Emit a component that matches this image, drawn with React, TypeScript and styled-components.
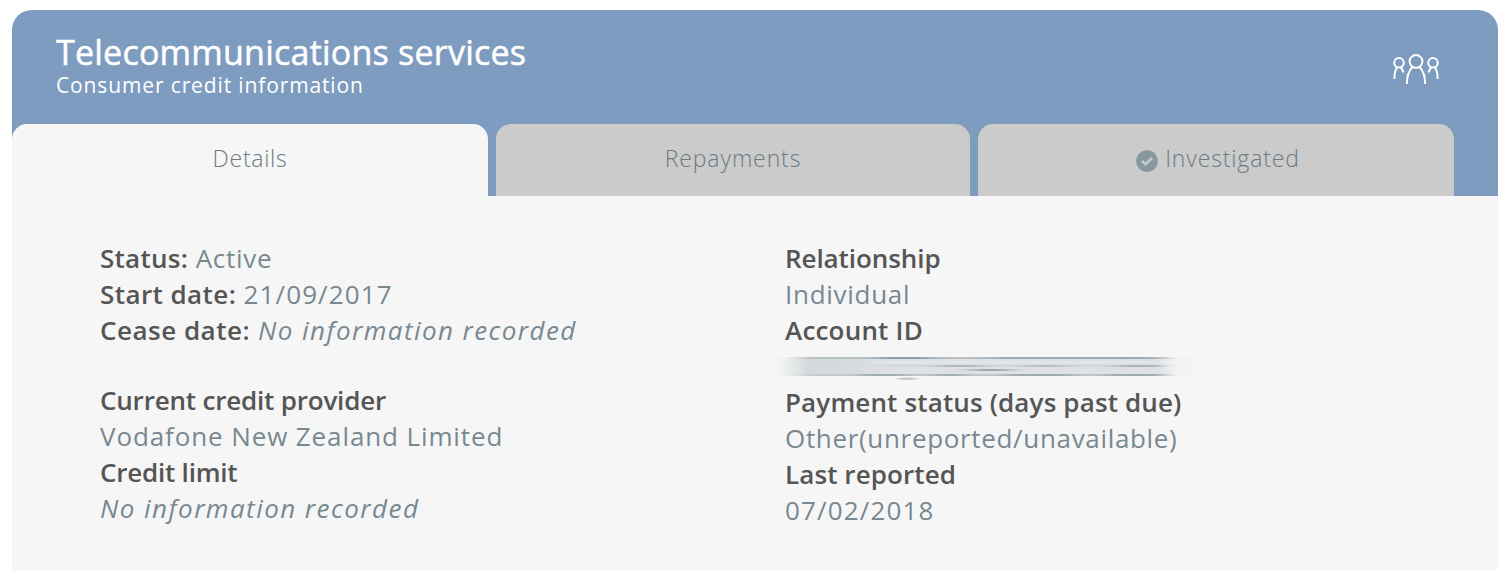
import React from 'react';
import styled, { createGlobalStyle } from 'styled-components';

const GlobalStyle = createGlobalStyle`
  *, *::before, *::after { box-sizing: border-box; }
  body {
    margin: 0;
    background: #ffffff;
    font-family: "Open Sans", "Liberation Sans", sans-serif;
  }
`;

const Page = styled.main`
  height: 570px;
  padding: 10px 12px 0;
  overflow: hidden;
`;

const Card = styled.section`
  display: flex;
  flex-direction: column;
  height: 560px;
  border-radius: 20px 20px 0 0;
  overflow: hidden;
  background: #f6f6f6;
`;

const Header = styled.header`
  display: flex;
  flex-direction: column;
  justify-content: space-between;
  height: 186px;
  background: #7e9bc0;
  color: #ffffff;
`;

const Heading = styled.div`
  display: flex;
  justify-content: space-between;
  padding: 22px 58px 0 44px;
`;

const Title = styled.h1`
  margin: 0;
  font-size: 34px;
  font-weight: 400;
  line-height: 40px;
  letter-spacing: 0.23px;
  white-space: nowrap;
  -webkit-text-stroke: 0.5px #ffffff;
`;

const Subtitle = styled.p`
  margin: 0;
  font-size: 21px;
  line-height: 26px;
  letter-spacing: 0.87px;
  white-space: nowrap;
`;

const PeopleIcon = styled.svg`
  width: 48px;
  height: 32px;
  margin-top: 21px;
  fill: none;
  stroke: #ffffff;
  stroke-width: 2;
  stroke-linecap: butt;
`;

const Tabs = styled.nav`
  display: grid;
  grid-template-columns: 476px 474px 476px;
  column-gap: 8px;
  height: 72px;
`;

const Tab = styled.button<{ $active?: boolean; $tracking: number; $indent?: number }>`
  display: flex;
  justify-content: center;
  align-items: flex-start;
  gap: 7px;
  padding: 20px 0 0 ${(p) => p.$indent ?? 0}px;
  border: 0;
  border-radius: 15px 15px 0 0;
  background: ${(p) => (p.$active ? '#f6f6f6' : '#cbcbcb')};
  color: #6d7a82;
  font-family: inherit;
  font-size: 23px;
  font-weight: 300;
  line-height: 28px;
  letter-spacing: ${(p) => p.$tracking}px;
`;

const CheckIcon = styled.svg`
  width: 22px;
  height: 22px;
  margin-top: 6px;
`;

const Body = styled.div`
  display: grid;
  grid-template-columns: 685px 1fr;
  padding: 44px 0 0 88px;
`;

const Column = styled.div<{ $gap?: number }>`
  display: flex;
  flex-direction: column;
  gap: ${(p) => p.$gap ?? 0}px;
`;

const Line = styled.div`
  height: 36px;
  font-size: 26px;
  line-height: 36px;
  white-space: nowrap;
`;

const Label = styled.strong<{ $tracking: number; $space?: number }>`
  margin-right: ${(p) => p.$space ?? 0}px;
  color: #555555;
  font-weight: 600;
  letter-spacing: ${(p) => p.$tracking}px;
`;

const Value = styled.span<{ $tracking: number; $italic?: boolean }>`
  color: #788891;
  font-style: ${(p) => (p.$italic ? 'italic' : 'normal')};
  letter-spacing: ${(p) => p.$tracking}px;
`;

const Smear = styled.svg`
  display: block;
  width: 440px;
  height: 36px;
  margin-left: -25px;
`;

const HiddenAccount = () => (
  <Smear viewBox="0 0 440 36">
    <defs>
      <linearGradient id="fade" x1="0" x2="1">
        <stop offset="0" stopColor="#fff" stopOpacity="0" />
        <stop offset="0.045" stopColor="#fff" stopOpacity="0.06" />
        <stop offset="0.11" stopColor="#fff" />
        <stop offset="0.9" stopColor="#fff" />
        <stop offset="0.95" stopColor="#fff" stopOpacity="0.12" />
        <stop offset="1" stopColor="#fff" stopOpacity="0" />
      </linearGradient>
      <linearGradient id="fill" x1="0" x2="1">
        <stop offset="0" stopColor="#d2d8da" />
        <stop offset="0.2" stopColor="#d5dadc" />
        <stop offset="0.3" stopColor="#dfe2e4" />
        <stop offset="1" stopColor="#dbdfe2" />
      </linearGradient>
      <mask id="ends">
        <rect width="440" height="36" fill="url(#fade)" />
      </mask>
      <filter id="streak" x="-20%" y="-100%" width="140%" height="300%">
        <feGaussianBlur stdDeviation="10 0.5" />
      </filter>
      <filter id="soft" x="-50%" y="-200%" width="200%" height="500%">
        <feGaussianBlur stdDeviation="3 0.4" />
      </filter>
    </defs>
    <g mask="url(#ends)">
      <rect x="0" y="9" width="440" height="19" fill="url(#fill)" />
      <g filter="url(#streak)">
        <rect x="40" y="9" width="385" height="2" fill="#b8c0c5" />
        <rect x="120" y="9" width="50" height="2" fill="#8b9ba6" />
        <rect x="230" y="9" width="165" height="2" fill="#9eaab3" />
        <rect x="120" y="13.5" width="290" height="1.5" fill="#e6e8ea" />
        <rect x="120" y="17" width="260" height="1.5" fill="#cfd4d9" />
        <rect x="180" y="17" width="40" height="2" fill="#aab4bb" />
        <rect x="265" y="17" width="40" height="2" fill="#b5bdc3" />
        <rect x="355" y="17" width="50" height="2" fill="#a9b3bb" />
        <rect x="212" y="21" width="38" height="2" fill="#9aa6ae" />
        <rect x="260" y="23" width="140" height="2" fill="#e2e4e7" />
        <rect x="40" y="26" width="385" height="2" fill="#c3cacf" />
        <rect x="100" y="26" width="45" height="2" fill="#9eaab2" />
        <rect x="175" y="26" width="30" height="2" fill="#9eaab2" />
        <rect x="245" y="26" width="70" height="2" fill="#9eaab2" />
        <rect x="345" y="26" width="60" height="2" fill="#9eaab2" />
      </g>
    </g>
    <ellipse cx="147" cy="30.7" rx="10" ry="1.1" fill="#b5bfc5" filter="url(#soft)" />
  </Smear>
);

export default function App() {
  return (
    <>
      <GlobalStyle />
      <Page>
        <Card>
          <Header>
            <Heading>
              <div>
                <Title>Telecommunications services</Title>
                <Subtitle>Consumer credit information</Subtitle>
              </div>
              <PeopleIcon viewBox="0 0 48 32">
                <circle cx="24" cy="8.4" r="6.4" />
                <path d="M14.8 31C14.8 23.5 17 17.5 20.6 13.8M33.2 31C33.2 23.5 31 17.5 27.4 13.8" />
                <circle cx="7" cy="9.8" r="4.8" />
                <path d="M2.4 26C2.3 21.2 3 17.3 5 14.2M8.6 14.2C10.1 15.8 11 17.5 11.5 19.6" />
                <circle cx="41" cy="9.8" r="4.8" />
                <path d="M45.6 26C45.7 21.2 45 17.3 43 14.2M39.4 14.2C37.9 15.8 37 17.5 36.5 19.6" />
              </PeopleIcon>
            </Heading>
            <Tabs>
              <Tab $active $tracking={0.7}>Details</Tab>
              <Tab $tracking={0.9}>Repayments</Tab>
              <Tab $tracking={0.85} $indent={4}>
                <CheckIcon viewBox="0 0 22 22">
                  <circle cx="11" cy="11" r="10.8" fill="#8798a1" />
                  <path d="M6 11L9.6 14.2L16 7.8" fill="none" stroke="#cbcbcb" strokeWidth="2.6" />
                </CheckIcon>
                Investigated
              </Tab>
            </Tabs>
          </Header>
          <Body>
            <Column $gap={34}>
              <div>
                <Line><Label $tracking={0.26} $space={7.6}>Status:</Label><Value $tracking={0.72}>Active</Value></Line>
                <Line><Label $tracking={0.42} $space={7.4}>Start date:</Label><Value $tracking={1.1}>21/09/2017</Value></Line>
                <Line><Label $tracking={0.5} $space={8}>Cease date:</Label><Value $italic $tracking={1.42}>No information recorded</Value></Line>
              </div>
              <div>
                <Line><Label $tracking={-0.19}>Current credit provider</Label></Line>
                <Line><Value $tracking={0.89}>Vodafone New Zealand Limited</Value></Line>
                <Line><Label $tracking={-0.22}>Credit limit</Label></Line>
                <Line><Value $italic $tracking={1.45}>No information recorded</Value></Line>
              </div>
            </Column>
            <Column>
              <Line><Label $tracking={-0.08}>Relationship</Label></Line>
              <Line><Value $tracking={0.72}>Individual</Value></Line>
              <Line><Label $tracking={0.2}>Account ID</Label></Line>
              <HiddenAccount />
              <Line><Label $tracking={0.14}>Payment status (days past due)</Label></Line>
              <Line><Value $tracking={0.67}>Other(unreported/unavailable)</Value></Line>
              <Line><Label $tracking={0.09}>Last reported</Label></Line>
              <Line><Value $tracking={1.15}>07/02/2018</Value></Line>
            </Column>
          </Body>
        </Card>
      </Page>
    </>
  );
}
